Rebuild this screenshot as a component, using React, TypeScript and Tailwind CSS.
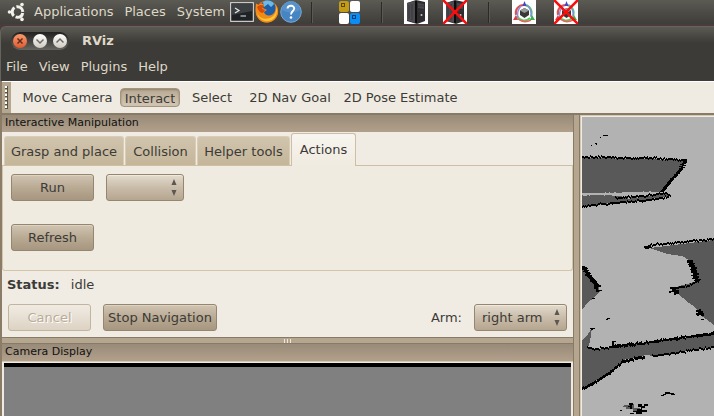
import React, { useState } from "react";

type Point = [number, number];

/* Lays small blocks along a polyline with a repeating wobble, like the cell edges of an occupancy grid. */
function gridEdge(points: Point[], thickness: number, seed = 1): string {
  let d = "";
  let n = seed;
  for (let i = 0; i < points.length - 1; i++) {
    const [x1, y1] = points[i];
    const [x2, y2] = points[i + 1];
    const steps = Math.max(Math.abs(x2 - x1), Math.abs(y2 - y1));
    const steep = Math.abs(y2 - y1) > Math.abs(x2 - x1);
    for (let s = 0; s <= steps; s++) {
      n = (n * 73 + 41) % 1009;
      const j = n % 5 === 0 ? 1 : n % 7 === 0 ? -1 : 0;
      const x = Math.round(x1 + ((x2 - x1) * s) / steps) + (steep ? j : 0);
      const y = Math.round(y1 + ((y2 - y1) * s) / steps) + (steep ? 0 : j);
      d += steep ? `M${x} ${y}h${thickness}v1h-${thickness}z` : `M${x} ${y}h1v${thickness}h-1z`;
    }
  }
  return d;
}

const topEdge = gridEdge([[0, 39], [65, 40], [104, 42]], 2);
const slantEdge = gridEdge([[101, 43], [97, 52], [78, 74]], 4, 7);
const lowEdge = gridEdge([[0, 88], [30, 85], [60, 83], [86, 79]], 2, 3);
const midEdge = gridEdge([[33, 80], [45, 79], [62, 78], [84, 75], [88, 78]], 2, 5);
const paleEdge = gridEdge([[0, 76], [30, 76], [82, 75]], 2, 9);
const paleEdge2 = gridEdge([[40, 79], [54, 78], [70, 76]], 2, 6);
const northEdge = gridEdge([[63, 130], [68, 127], [100, 124], [132, 121]], 2, 11);
const bayEdge = gridEdge([[105, 143], [109, 154], [112, 163]], 6, 4);
const bayFloor = gridEdge([[116, 163], [104, 168], [88, 171]], 2, 8);
const westEdge = gridEdge([[-2, 149], [4, 158], [12, 167]], 5, 6);
const westEdge2 = gridEdge([[0, 150], [4, 157], [10, 165]], 4, 16);
const bandTop = gridEdge([[5, 229], [13, 231], [50, 227], [95, 220], [132, 215]], 2, 2);
const bandTop2 = gridEdge([[30, 228], [58, 225], [132, 216]], 2, 13);
const bandLow = gridEdge([[70, 238], [100, 234], [132, 229]], 2, 12);
const bandLow2 = gridEdge([[0, 270], [10, 265], [28, 254], [40, 243], [58, 239], [62, 239]], 3, 15);

function OccupancyMap() {
  return (
    <svg
      className="block h-full w-full"
      viewBox="0 0 132 299"
      preserveAspectRatio="xMinYMin slice"
      shapeRendering="crispEdges"
      role="img"
      aria-label="Map"
    >
      <rect width="132" height="299" fill="#b2b2b2" />
      <g fill="#595959">
        <path d="M0 41L65 42L105 44L80 75L0 76Z" />
        <path d="M0 78L60 79L84 76L90 79L60 83L0 89Z" />
        <path d="M68 131L132 123V208L124 202L118 198L113 190L107 186L95 176L90 171L116 164L107 143L100 139L85 137Z" />
        <path d="M0 149L16 168L18 174L12 181L6 185L0 193Z" />
        <path d="M10 211L8 225L6 231L13 233L132 217V230L71 239L64 238L41 243L28 256L0 271V223L4 220Z" />
        <path d="M42 288h5v-1h5v4h4v3h-5v-2h-7v-2h-3zM53 291h5v5h-4z" />
      </g>
      <path d={paleEdge + paleEdge2} fill="#b2b2b2" />
      <g fill="#000">
        <path d={topEdge + slantEdge + lowEdge + midEdge} />
        <path d={northEdge + bayEdge + bayFloor} />
        <path d={westEdge + westEdge2 + bandTop + bandTop2 + bandLow + bandLow2} />
        <path d="M22 18h4v1h-4zM21 18h2v1h-2zM18 20h1v1h-1zM13 26h2v1h-2zM14 27h1v1h-1zM9 28h1v1h-1z" />
        <path d="M12 168h7v2h-3v3h4v1h-6v-2h-2zM14 174h3v1h-3zM10 181h3v1h-3z" />
        <path d="M62 129h6v1h2v1h-3v1h-4v-1h-1z" />
        <path d="M88 170h6v3h3v4h-3v1h-2v-3h-3v1h-2v-2h3v-2h-2z" />
        <path d="M114 193h3v-1h2v2h2v2h1v3h-3v-1h-2v1h-2v-1h-1v-2h2v-1h-2zM119 202h3v1h-3z" />
        <path d="M25 201h3v1h-3zM24 202h2v1h-2zM8 211h5v1h-2v1h-2zM30 224h4v1h-2v3h3v3h-4v-3h-1z" />
        <path d="M79 278h2v-1h2v-2h5v1h4v1h1v1h-4v-1h-5v1h-2v1h-3z" />
        <path d="M36 294h4v-1h-2v1zM47 286h4v2h-1v4h-2v-2h-2v-1h2zM56 287h4v2h2v-2h4v2h-3v2h-3v2h5v2h-5v2h-6v-2h-3v-1h4v-2h4v-2h-3zM48 296h4v1h-4z" />
      </g>
    </svg>
  );
}

function UbuntuLogo() {
  return (
    <svg width="19" height="20" viewBox="0 0 19 20" aria-hidden="true">
      <circle cx="10.500" cy="10" r="5.300" fill="none" stroke="#f4f1ea" strokeWidth="3" strokeDasharray="9.100 2" strokeDashoffset="-1" />
      <g fill="#f4f1ea">
        <circle cx="2.500" cy="10" r="1.800" />
        <circle cx="15" cy="2.600" r="1.800" />
        <circle cx="15" cy="17.400" r="1.800" />
      </g>
    </svg>
  );
}

function TerminalIcon() {
  return (
    <svg width="24" height="20" viewBox="0 0 24 20" aria-hidden="true">
      <rect x=".5" y=".5" width="23" height="19" rx="1" fill="#1f2224" stroke="#c9c9c7" strokeWidth="1.500" />
      <path d="M2 2H22V9L2 13Z" fill="#3c4042" />
      <path d="M5 6L9 8.500L5 11M10.500 14H16" fill="none" stroke="#e4e8e9" strokeWidth="1.200" />
    </svg>
  );
}

function FirefoxIcon() {
  return (
    <svg width="24" height="24" viewBox="0 0 24 24" aria-hidden="true">
      <circle cx="12" cy="11.500" r="11" fill="#e66d10" />
      <circle cx="13" cy="9" r="8.500" fill="#1d5fa8" />
      <path d="M8 2C12-1 18 1 19 4L16 7L13 4L9 7Z" fill="#6db9e8" />
      <path d="M1 4C2 3 3 5 4 5C6 3 8 4 9 5L8 8L12 10L9 12C10 16 15 17 19 13C21 10 21 6 19 3C23 6 24 11 22.500 15C20 22 12 24.500 6 21C0 17 0 10 1 4Z" fill="#f28a17" />
      <path d="M21 6C24 13 20 20 14 21C8 22 3 18 2 13C5 19 10 19.500 15 18C20 16 22 11 21 6Z" fill="#fbc736" />
      <path d="M2 7C5 4 8 5 9 6L7 9L10 10L8 13C5 13 3 10 2 7Z" fill="#d94b0b" />
    </svg>
  );
}

function HelpIcon() {
  return (
    <svg width="22" height="22" viewBox="0 0 22 22" aria-hidden="true">
      <circle cx="11" cy="11" r="10.300" fill="#4685c2" stroke="#76a8d6" strokeWidth="1" />
      <path d="M2 9A9 9 0 0 1 20 9Q11 14 2 9Z" fill="#5793ca" />
      <path d="M7.500 7.500C8 3.500 14.500 4 14.200 7.800C14 10 11 10.200 11 13.500" fill="none" stroke="#fff" strokeWidth="1.900" />
      <circle cx="11" cy="16.500" r="1.300" fill="#fff" />
    </svg>
  );
}

function RedCross() {
  return <path d="M0 0L24 24M24 0L0 24" stroke="#fb0d0d" strokeWidth="2.600" />;
}

function ServerIcon({ off = false }: { off?: boolean }) {
  return (
    <svg width="24" height="24" viewBox="0 0 24 24" aria-hidden="true">
      <rect width="24" height="24" fill="#fff" />
      <path d="M3 3L12 0L21 2V21L13 24L3 21Z" fill="#2d2d30" />
      <path d="M3 3L11 1V23L3 20Z" fill="#4b4b50" />
      <path d="M14 3L20 4V9L14 8Z" fill="#48484c" />
      <path d="M12 1V23" stroke="#0c0c0d" strokeWidth="2" />
      <path d="M5 5V19M8 4V20M14 6H20M14 11H20" stroke="#38383c" />
      <circle cx="17.500" cy="15" r="1" fill="#c5c5c8" />
      {off && <RedCross />}
    </svg>
  );
}

function RobotIcon({ off = false }: { off?: boolean }) {
  return (
    <svg width="24" height="24" viewBox="0 0 24 24" aria-hidden="true">
      <rect width="24" height="24" fill="#fff" />
      <g fill="none" strokeWidth="2">
        <path d="M12 5A8 8 0 0 0 4 15" stroke="#e05252" />
        <path d="M5 16A8 8 0 0 0 18 18" stroke="#4fcf60" />
        <path d="M19 16A8 8 0 0 0 13 5" stroke="#55c865" />
        <path d="M9 6A13 13 0 0 0 6 18M15 5A13 13 0 0 1 19 17" stroke="#8290e8" strokeWidth="1.500" />
        <path d="M6 19A12 12 0 0 0 19 20" stroke="#ee6060" strokeWidth="1.500" />
      </g>
      <path d="M12.500 1L14.500 6H10.500Z" fill="#3f46c7" />
      <path d="M1 20L4 15L6 20Z" fill="#da3d45" />
      <path d="M23 20L20 15L18 20Z" fill="#38b447" />
      <path d="M8 10.500L12.500 8L17 10.500V15L12.500 18L8 15Z" fill="#383838" />
      <path d="M8 10.500L12.500 8L17 10.500L12.500 13Z" fill="#9a9a9a" />
      {off && <RedCross />}
    </svg>
  );
}

function PanelSeparator() {
  return <span className="box-content h-[21px] w-px shrink-0 border-r border-[#5b5953] bg-[#2b2a27]" />;
}

function IconButton({ label, children }: { label: string; children: React.ReactNode }) {
  return (
    <button type="button" aria-label={label} className="flex shrink-0">
      {children}
    </button>
  );
}

function TopPanel() {
  return (
    <header className="flex h-[24px] shrink-0 items-center bg-linear-to-b from-[#5b5a53] to-[#3e3d39] pl-[7px] text-[#dfd8c8]">
      <UbuntuLogo />
      <nav className="ml-[8px] flex gap-[11px] leading-[22px]">
        <button type="button">Applications</button>
        <button type="button">Places</button>
        <button type="button">System</button>
      </nav>
      <div className="ml-[5px] flex items-center gap-px">
        <IconButton label="Terminal"><TerminalIcon /></IconButton>
        <IconButton label="Web browser"><FirefoxIcon /></IconButton>
        <IconButton label="Help"><HelpIcon /></IconButton>
      </div>
      <div className="ml-[9px] flex items-center">
        <PanelSeparator />
        <div className="mr-[21px] ml-[26px] grid grid-cols-2 gap-px">
          <span className="h-[11px] w-[10px] rounded-xs bg-[#c49b15] p-[2px]"><i className="block size-[4px] border border-[#5b4709]" /></span>
          <span className="h-[11px] w-[10px] rounded-xs bg-white" />
          <span className="h-[11px] w-[10px] rounded-xs bg-white" />
          <span className="h-[11px] w-[10px] rounded-xs bg-[#0a8df5] p-[2px]"><i className="block size-[4px] border border-[#093e6d]" /></span>
        </div>
        <PanelSeparator />
      </div>
      <div className="ml-[21px] flex items-center gap-[15px]">
        <IconButton label="Start robot computer"><ServerIcon /></IconButton>
        <IconButton label="Stop robot computer"><ServerIcon off /></IconButton>
      </div>
      <div className="ml-[21px] flex items-center gap-[22px]">
        <PanelSeparator />
        <IconButton label="Start robot"><RobotIcon /></IconButton>
      </div>
      <div className="ml-[18px] flex">
        <IconButton label="Stop robot"><RobotIcon off /></IconButton>
      </div>
    </header>
  );
}

function TitleBar() {
  const light = "flex size-[14px] items-center justify-center rounded-full bg-linear-to-b from-white to-[#cfcac0]";
  return (
    <div className="flex h-[28px] items-center pl-[10px]">
      <div className="flex h-[18px] items-center gap-[6px] rounded-full bg-linear-to-b from-[#22211f] to-[#67655f] px-[2px]">
        <button type="button" aria-label="Close" className="flex size-[14px] items-center justify-center rounded-full bg-linear-to-b from-[#f79a6f] to-[#e2592b]">
          <svg width="8" height="8" viewBox="0 0 8 8"><path d="M1.500 1.500L6.500 6.500M6.500 1.500L1.500 6.500" stroke="#5c2d1a" strokeWidth="1.500" /></svg>
        </button>
        <button type="button" aria-label="Minimize" className={light}>
          <svg width="8" height="8" viewBox="0 0 8 8"><path d="M.5 2.500L4 6L7.500 2.500" fill="none" stroke="#6b6963" strokeWidth="1.500" /></svg>
        </button>
        <button type="button" aria-label="Maximize" className={light}>
          <svg width="8" height="8" viewBox="0 0 8 8"><path d="M.5 5.500L4 2L7.500 5.500" fill="none" stroke="#6b6963" strokeWidth="1.500" /></svg>
        </button>
      </div>
      <h1 className="ml-[13px] font-bold">RViz</h1>
    </div>
  );
}

const tools = [
  { name: "Move Camera", width: "w-[103px]" },
  { name: "Interact", width: "w-[60px]" },
  { name: "Select", width: "w-[62px]" },
  { name: "2D Nav Goal", width: "w-[92px]" },
  { name: "2D Pose Estimate", width: "w-[127px]" },
];

function Toolbar() {
  const [active, setActive] = useState("Interact");
  return (
    <div role="toolbar" className="flex h-[32px] shrink-0 items-center border-t border-white bg-[#f0ebe2]">
      <div className="flex h-full w-[9px] justify-center bg-[#b5a68f] py-[4px]">
        <span className="h-full w-[3px] border-r border-[#5d5343] bg-[repeating-linear-gradient(#fff_0_2px,#5d5343_2px_3px,#b5a68f_3px_4px)]" />
      </div>
      <div className="ml-[5px] flex gap-px">
        {tools.map((t) => (
          <button
            key={t.name}
            type="button"
            aria-pressed={active === t.name}
            onClick={() => setActive(t.name)}
            className={`${t.width} flex h-[19px] justify-center rounded-[4px] border ${
              active === t.name
                ? "border-[#a3957e] bg-linear-to-b from-[#b7a891] to-[#d3c7b4] pt-[5px] shadow-[inset_0_1px_2px_#8f816c]"
                : "border-transparent pt-[4px]"
            }`}
          >
            <span className="flex h-[13px] items-end overflow-hidden whitespace-nowrap leading-[17px]">{t.name}</span>
          </button>
        ))}
      </div>
    </div>
  );
}

function DockTitle({ children }: { children: React.ReactNode }) {
  return (
    <h2 className="h-[17px] shrink-0 bg-linear-to-b from-[#998b79] to-[#b1a08b] pl-[3px] text-[11px] leading-[15px] text-[#111]">
      {children}
    </h2>
  );
}

function PushButton({ width, disabled, children }: { width: string; disabled?: boolean; children: React.ReactNode }) {
  return (
    <button
      type="button"
      disabled={disabled}
      className={`${width} h-[27px] shrink-0 whitespace-nowrap rounded-[3px] border leading-[24px] ${
        disabled
          ? "border-[#c2b59f] bg-linear-to-b from-[#f0ebe3] to-[#ddd3c4] text-[#b9ac97] [text-shadow:1px_1px_0_#fff]"
          : "border-[#95866f] bg-linear-to-b from-[#d0c4b2] via-[#b9aa94] to-[#a79680] shadow-[inset_0_1px_0_#ddd3c3]"
      }`}
    >
      {children}
    </button>
  );
}

function DropDown({ id, width, label, options }: { id: string; width: string; label?: string; options: string[] }) {
  return (
    <div className={`${width} relative shrink-0`}>
      <select
        id={id}
        aria-label={label}
        className="block h-[27px] w-full appearance-none rounded-[3px] border border-[#95866f] bg-linear-to-b from-[#e3dbce] via-[#c9bca9] to-[#b5a690] pl-[7px] shadow-[inset_0_1px_0_#efe9df]"
      >
        {options.map((o) => (
          <option key={o}>{o}</option>
        ))}
      </select>
      <svg className="pointer-events-none absolute top-[5px] right-[7px]" width="6" height="17" viewBox="0 0 6 17" aria-hidden="true">
        <path d="M3 0L5.500 6H.5ZM3 17L5.500 11H.5Z" fill="#5c5850" />
      </svg>
    </div>
  );
}

const tabs = [
  { name: "Grasp and place", width: "w-[120px]" },
  { name: "Collision", width: "w-[71px]" },
  { name: "Helper tools", width: "w-[93px]" },
  { name: "Actions", width: "w-[65px]" },
];

function Manipulation() {
  const [tab, setTab] = useState("Actions");
  return (
    <section className="flex flex-col">
      <DockTitle>Interactive Manipulation</DockTitle>
      <div role="tablist" className="flex h-[34px] items-end gap-px border-b border-[#cdbfa3] pl-[2px]">
        {tabs.map((t) => (
          <button
            key={t.name}
            type="button"
            role="tab"
            aria-selected={tab === t.name}
            onClick={() => setTab(t.name)}
            className={`${t.width} whitespace-nowrap rounded-t-[3px] border-x border-t ${
              tab === t.name
                ? "-mb-px h-[33px] border-[#cdbfa3] bg-linear-to-b from-[#f8f5f0] to-[#f0ebe0] pb-px"
                : "h-[29px] border-[#d9cdb8] bg-linear-to-b from-[#d0c4ae] to-[#c5b699] pt-px"
            }`}
          >
            {t.name}
          </button>
        ))}
      </div>
      <div role="tabpanel" className="flex h-[105px] flex-col gap-[23px] rounded-b-[3px] border-x border-b border-[#d3c5a8] bg-[#f0ebe1] pt-[8px] pl-[8px]">
        <div className="flex gap-[12px]">
          <PushButton width="w-[83px]">Run</PushButton>
          <DropDown id="action" width="w-[78px]" label="Action" options={[""]} />
        </div>
        <div className="flex">
          <PushButton width="w-[83px]">Refresh</PushButton>
        </div>
      </div>
      <p className="flex h-[27px] items-center gap-[11px] pl-[5px]">
        <strong>Status:</strong>
        <span>idle</span>
      </p>
      <div className="mt-[6px] mb-[6px] flex items-center gap-[12px] pr-[6px] pl-[6px]">
        <PushButton width="w-[83px]" disabled>Cancel</PushButton>
        <PushButton width="w-[114px]">Stop Navigation</PushButton>
        <label htmlFor="arm" className="ml-auto">Arm:</label>
        <DropDown id="arm" width="w-[93px]" options={["right arm", "left arm"]} />
      </div>
    </section>
  );
}

export default function App() {
  return (
    <div className="flex h-screen flex-col overflow-hidden bg-[#3c3b37] font-['DejaVu_Sans',sans-serif] text-[13px] leading-[18px] text-[#3c3b37]">
      <TopPanel />
      <div className="flex min-h-0 flex-1 flex-col bg-[#4a3c3c] pt-[2px]">
        <div className="shrink-0 rounded-tl-[6px] border-t border-l border-[#65635c] bg-linear-to-b from-[#5b5a53] to-[#3c3b37] to-[16px] text-[#dfd8c8]">
          <TitleBar />
          <nav className="flex h-[26px] items-center gap-[11px] pb-[2px] pl-[5px]">
            <button type="button">File</button>
            <button type="button">View</button>
            <button type="button">Plugins</button>
            <button type="button">Help</button>
          </nav>
        </div>
        <main className="flex min-h-0 flex-1 flex-col border-l-2 border-[#8a7c67] bg-[#f0ebe3]">
          <Toolbar />
          <div className="flex min-h-0 flex-1 border-t-2 border-[#877b67]">
            <div className="flex min-w-0 flex-1 flex-col border-r border-[#877b67]">
              <Manipulation />
              <div className="flex h-[7px] shrink-0 items-center justify-center gap-[2px] border-y border-[#877b67] bg-[#b5a68f]">
                <span className="h-[4px] w-px bg-[#eee7da]" />
                <span className="h-[4px] w-px bg-[#eee7da]" />
                <span className="h-[4px] w-px bg-[#eee7da]" />
              </div>
              <section className="flex min-h-0 flex-1 flex-col">
                <DockTitle>Camera Display</DockTitle>
                <div className="min-h-0 flex-1 border-t border-[#d5c8b4] px-[2px] pt-px">
                  <div className="h-full border-t-4 border-black bg-[#808080]" />
                </div>
              </section>
            </div>
            <div className="w-[6px] shrink-0 border-r border-[#877b67] bg-[#b5a68f]" />
            <div className="w-[134px] shrink-0 border-t border-l border-[#d5c8b4] pt-px pl-px">
              <OccupancyMap />
            </div>
          </div>
        </main>
      </div>
    </div>
  );
}
